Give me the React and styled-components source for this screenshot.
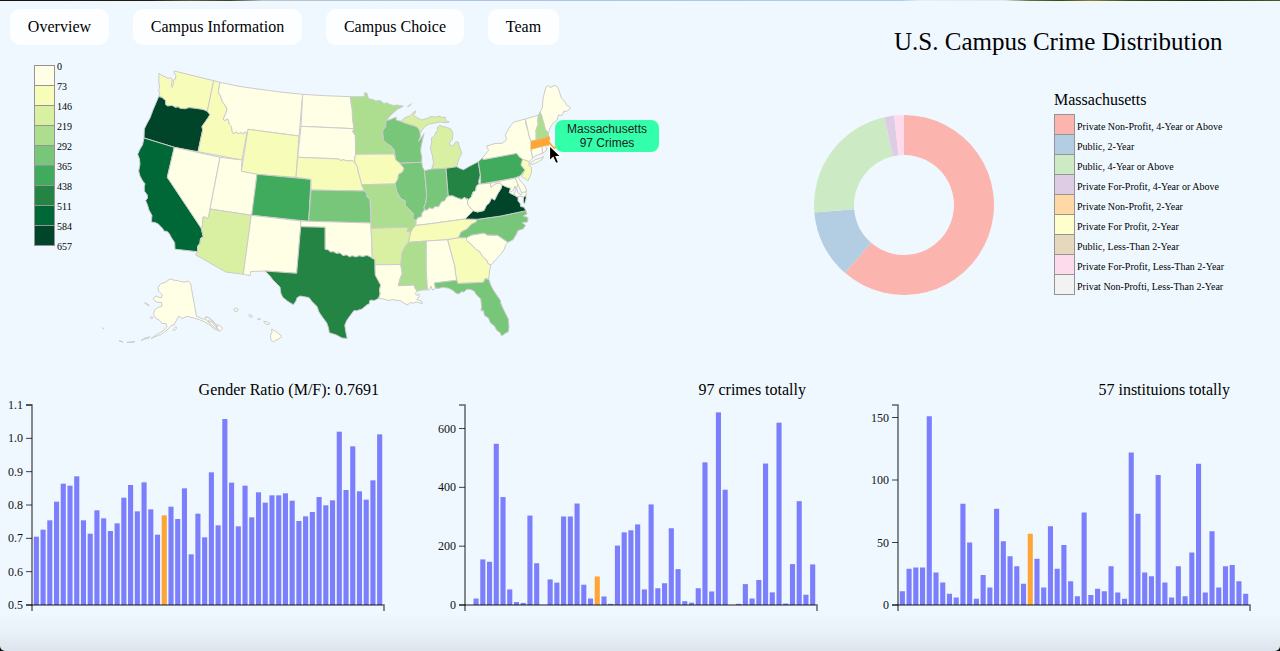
import React from "react";
import styled, { createGlobalStyle } from "styled-components";

const Global = createGlobalStyle`
  * { box-sizing: border-box; }
  html, body { margin: 0; padding: 0; background: #000; }
  body { font-family: "Liberation Serif", "Times New Roman", serif; color: #000; overflow: hidden; }
`;

const Page = styled.main`
  position: relative;
  display: flex;
  flex-direction: column;
  width: 1280px;
  height: 651px;
  overflow: hidden;
  border-radius: 0 0 5px 5px;
  background: linear-gradient(to bottom, rgba(221, 228, 236, 0) 612px, rgba(221, 228, 236, 0.35) 632px, #dde4ec 651px), #f0f8ff;
`;

const Backdrop = styled.div`
  flex: none;
  height: 1px;
  background: linear-gradient(to right, #14120c 0, #201d12 150px, #5c6238 190px, #3c4024 230px, #b9c4c9 262px, #a8c4ea 500px, #aecbf2 900px, #e6edf7 920px, #dfe8f4 1005px, #60733a 1030px, #38480f 1060px, #8a8630 1090px, #3c4a12 1130px, #232c08 1200px, #4d5c20 1280px);
`;

const Upper = styled.section`
  display: flex;
  flex: none;
  height: 374px;
`;

const MapPane = styled.div`
  display: flex;
  flex-direction: column;
  width: 800px;
`;

const Nav = styled.nav`
  display: flex;
  gap: 24px;
  height: 44px;
  padding: 8px 0 0 10px;
`;

const NavButton = styled.button`
  width: ${(p) => p.$width}px;
  height: 36px;
  padding: 0;
  border: 0;
  border-radius: 10px;
  background: #fdfeff;
  color: #000;
  font: 16px/36px "Liberation Serif", "Times New Roman", serif;
  letter-spacing: 0.03px;
  white-space: nowrap;
`;

const MapRow = styled.div`
  position: relative;
  display: flex;
  padding-left: 34px;
`;

const Scale = styled.ul`
  list-style: none;
  width: 56px;
  margin: 0;
  padding: 20px 0 0;
`;

const ScaleStep = styled.li`
  display: flex;
  height: 20px;
  font-size: 10px;
  line-height: 4px;
  gap: 2px;
`;

const Swatch = styled.span`
  flex: none;
  width: 21px;
  height: 21px;
  border: 1px solid #949494;
  background: ${(p) => p.$color};
`;

const ScaleEnd = styled.li`
  height: 8px;
  padding-left: 23px;
  font-size: 10px;
  line-height: 4px;
`;

const MapSvg = styled.svg`
  display: block;
  width: 500px;
  height: 305px;
`;

const Tooltip = styled.div`
  position: absolute;
  left: 555px;
  top: 75px;
  width: 104px;
  height: 32px;
  padding-top: 2px;
  border-radius: 8px;
  background: #33ffaa;
  color: #222;
  text-align: center;
  font: 12px/14px "Liberation Sans", Arial, sans-serif;
`;

const Cursor = styled.svg`
  position: absolute;
  left: 547px;
  top: 99px;
  width: 18px;
  height: 22px;
`;

const DonutPane = styled.div`
  display: flex;
  flex-direction: column;
  flex: 1;
`;

const Title = styled.h1`
  margin: 0;
  padding: 25px 0 0 94px;
  font-size: 25px;
  line-height: 32px;
  font-weight: 400;
  white-space: nowrap;
`;

const DonutRow = styled.div`
  display: flex;
  padding: 32px 0 0 14px;
`;

const Donut = styled.svg`
  flex: none;
  width: 180px;
  height: 180px;
  margin-top: 25px;
`;

const Key = styled.div`
  margin-left: 60px;
`;

const KeyTitle = styled.h2`
  margin: 0 0 5px;
  font-size: 16px;
  line-height: 19px;
  font-weight: 400;
`;

const KeyRow = styled.div`
  display: flex;
  gap: 2px;
  height: 20px;
  font-size: 10px;
  line-height: 26px;
  white-space: nowrap;
`;

const Charts = styled.section`
  display: flex;
  flex: none;
`;

const ChartCard = styled.figure`
  width: ${(p) => p.$width}px;
  margin: 0;
`;

const ChartTitle = styled.figcaption`
  height: 30px;
  padding: 5px ${(p) => p.$end}px 0 0;
  text-align: right;
  font-size: 16px;
  line-height: 20px;
  white-space: nowrap;
`;

const Plot = styled.svg`
  display: block;
  width: 100%;
  height: 216px;
  overflow: visible;
`;

const AxisText = styled.text`
  font-size: 12px;
  text-anchor: end;
  fill: #111;
`;

const YL = ["#ffffe5", "#f7fcb9", "#d9f0a3", "#addd8e", "#78c679", "#41ab5d", "#238443", "#006837", "#004529"];
const scaleLabels = [0, 73, 146, 219, 292, 365, 438, 511, 584];

const states = [
  ["WA", 1, "159,73 161,75 165,76.7 168,78.5 170.7,77.7 172.3,80 171.5,83 172,87.5 173.5,84 173.2,80 175.5,79 176,75 174,73.5 174.3,71 213.7,80.7 207.3,111.3 203,109.5 196.7,108.5 189,107.6 185,108.8 180,108.3 178,106.8 175.7,107.5 172,105.4 167.7,106 165.6,104.6 165.5,100.5 162,97.5 158.7,96.3 160,94 158.5,90 159.5,88 158.8,81"],
  ["OR", 8, "158.7,96.5 162,97.5 165.5,100.5 165.6,104.6 167.7,106 172,105.4 175.7,107.5 178,106.8 180,108.3 185,108.8 189,107.6 196.7,108.5 203,109.5 207.3,111.3 210,114.5 208,118 205,122.2 202,126.5 202.7,130 202,133 198,151.7 174.3,147.3 144,138 144.3,129 147,123.5 150,118 153,110"],
  ["CA", 7, "144,138 174.3,147.3 167.3,177.3 201.3,228.3 203.3,236.7 200.5,238.5 200,243.3 197.5,246.5 197.7,251.7 175,249.2 174.7,242.7 171,237 169.5,234 167.3,231.5 164,231 162.7,228.5 158.3,224 155,222.5 151.3,222 152,215.5 149,210 147.5,205 145.7,200.7 147.5,198 147.3,195 144.3,191 144.3,186.7 145,183.8 142.7,181 140,176 138.7,171 140,164 139.5,159 137.7,154.3 140,149 142.5,145"],
  ["NV", 0, "174.3,147.3 220,157.3 210,209 208.7,216.7 207.3,218.7 205,217 203,217.3 202.3,226.7 201.3,228.3 167.3,177.3"],
  ["ID", 1, "213.7,80.7 220,82.3 218.3,92.3 220.5,96 222.3,101.7 225,105 227,109 225.5,114 223.3,119 224.3,120.5 228,119 229.5,124.5 231.5,126.5 232,131 233.3,133.6 236,132 239,133.7 241,132.5 243.5,134 245,131.5 246.7,133.8 242,160 198,151.7 202.7,130 202,126.5 205,122.2 208,118 210,114.5 207.3,111.3"],
  ["MT", 0, "220,82.3 240,86.5 260,89.3 280,92 302.7,94.3 299,136 248,129.3 246.7,133.8 245,131.5 243.5,134 241,132.5 239,133.7 236,132 233.3,133.6 232,131 231.5,126.5 229.5,124.5 228,119 224.3,120.5 223.3,119 225.5,114 227,109 225,105 222.3,101.7 220.5,96 218.3,92.3"],
  ["WY", 1, "248,129.3 299,136 296,177.3 257,174.5 241.3,171.3"],
  ["UT", 0, "220,157.3 242,160 241.3,171.3 257,174.3 251.7,215.3 210,209"],
  ["CO", 5, "257,174.3 311,179.3 308.7,221.3 251.7,215.3"],
  ["AZ", 2, "210,209 251.3,215.3 243.3,274.3 225.7,272 195.3,254.7 197.7,251.7 197.5,246.5 200,243.3 200.5,238.5 203.3,236.7 201.3,228.3 202.3,226.7 203,217.3 205,217 207.3,218.7 208.7,216.7"],
  ["NM", 0, "251.3,215.3 300.7,221 300.7,226.7 296.7,273.3 265.7,271 250.7,271.5 250,275.7 243.3,274.3"],
  ["ND", 0, "302.7,94.3 325,95.7 350.3,96.7 351,103 352.3,110 352.5,118 354,128.7 301,126.3"],
  ["SD", 0, "301,126.3 354,128.7 352.7,131.7 355.3,135 355.7,154.3 354.7,158 355,162.7 352,160.3 350,161 346,160.6 343,159.7 341,160.5 338,158.9 297.7,157.3"],
  ["NE", 1, "297.7,157.3 338,158.9 341,160.5 343,159.7 346,160.6 350,161 352,160.3 355,162.7 357.5,167 358.3,172 359.8,177 361.7,184.5 364.3,191 311,190 311,179.3 296,177.3"],
  ["KS", 4, "311,190 364.3,191 367,193.5 367,197 370,199.5 371,223 308.7,221.3"],
  ["OK", 0, "300.7,221 371,223 371.7,241.7 372.3,258.3 369.5,256.5 366.7,255.4 363,256.5 359,255.8 356,257 352,255.7 350,257 346.5,255 343,255.6 340,253 336.5,253.4 333.3,251.7 330.5,252 328,249.8 325,249.3 325,227.3 300.7,226.7"],
  ["TX", 6, "300.7,226.7 325,227.3 325,249.3 328,249.8 330.5,252 333.3,251.7 336.5,253.4 340,253 343,255.6 346.5,255 350,257 352,255.7 356,257 359,255.8 363,256.5 366.7,255.4 369.5,256.5 372.3,258.3 375,259.3 375.3,275 378,280 380.7,285 379.5,290 380.2,294 378.7,298.3 374,300.7 371.7,300 369.5,300.8 369.5,303.5 366.7,305 362,309 356.7,310.7 354,310.5 351,314.5 347,320 344.8,325 345.6,331 347.2,338.5 342,338 336,334.8 329.3,332.7 328.5,328 326.8,323 322,316.5 319,312 317,306.5 312,301.5 309,297.6 300,296 297,297.8 296,301 293.3,304.7 288,301.5 282.7,297.3 280.8,293 280,287 273,280 270,276 265,271 296.7,273.3"],
  ["MN", 3, "350.3,96.7 364.3,96.7 364.8,92.7 367,93.2 368.3,98.6 373,99.6 375.5,101 380,100.5 384,103.5 387,102.8 390,104.6 394,105.5 397,105 403.3,106.2 397,109.6 391,115 386,120.7 385.7,126.7 382.7,130.7 383.3,140 387,143.5 391,146 394.3,150 394.3,154 355.7,154.3 355.3,135 352.7,131.7 354,128.7 352.5,118 352.3,110"],
  ["WI", 4, "386,120.7 390,119.6 394,118 396.3,117.2 396,120 400.7,121.3 408,124 415,126 417.6,127.3 419.3,130 420,132.5 420.4,136.5 418.5,141.5 421.5,137.5 424,133.3 422.5,140 421,147 420.7,152 421.9,157 421.7,162.3 400,163.3 395.7,160 394.3,150 391,146 387,143.5 383.3,140 382.7,130.7 385.7,126.7"],
  ["IA", 1, "355.7,154.3 394.3,154 395.7,160 400,163.3 404,168.3 402.7,172 398.5,174.5 398,179 395,184 361.7,184.7 359.8,177 358.3,172 357.5,167 355,162.7 354.7,158"],
  ["UP", 2, "400.7,121.3 405,117.6 410,116 415,110.7 416,111.5 413.5,115.5 416,117 421.7,120 427,118.4 431,116.6 436,117 440,116 441,117.5 445,117 445.5,120.5 449.3,122 446,122.7 440,122 433.3,123.3 428.5,124.2 425,126.7 422,130 420.7,132.7 419.3,130 417.6,127.3 415,126 408,124"],
  ["Isle Royale", 2, "407.5,107 409.5,104.7 411.5,103.8 409,106.5"],
  ["MI", 2, "439.3,125.5 445,127 450.7,128.7 453,133 452.3,139 449.5,143 450.5,146 453,146 455.5,142 458,142 459.7,147 461.8,153.3 458.5,160 456.7,166.7 446,168.3 431.7,169 433.5,163 432.5,156 430.5,149 431.7,141 431.3,138 434,136.7 436,132 438,130.5 437,128"],
  ["IL", 4, "400,163.3 421.7,162.3 422.5,167 424.5,170.7 426.7,195 425.7,203.3 424,207 424.5,210 422,213 421.7,216.7 418,217.5 416,220.7 412.7,218 413.3,213.3 409,209.5 405,205 405.5,201 401,199 396.7,191.7 395,184 398,179 398.5,174.5 402.7,172 404,168.3"],
  ["IN", 4, "424.5,170.7 431.7,169 446,168.3 448.3,196 446,198 445,200.7 441.5,201.8 438.5,207 435,206.5 433,208.8 429.5,208 427,210.2 424.5,210 424,207 425.7,203.3 426.7,195"],
  ["OH", 6, "446,168.3 456.7,166.7 460,168.4 463.5,169.7 469,166.5 478.3,161.7 480.4,175 478.7,181 479,184 476.5,186 475.5,191 473,192 471.5,196.5 469,199.5 464.5,197.6 461.5,199.4 456,197.6 453,196 448.3,196"],
  ["KY", 0, "448.3,196 453,196 456,197.6 461.5,199.4 464.5,197.6 467.5,200.7 468,205 473.3,210.7 469,215 465,219 425,224.4 415.7,225.4 416,220.7 418,217.5 421.7,216.7 422,213 424.5,210 427,210.2 429.5,208 433,208.8 435,206.5 438.5,207 441.5,201.8 445,200.7 446,198"],
  ["TN", 1, "415.7,225.4 425,224.4 465,219 477.5,219.3 476,222 471,224.6 467,229 461,232 458.5,237.7 447.7,239.7 408.3,242.3 410.7,232 413,228"],
  ["MO", 3, "361.7,184.7 395,184 396.7,191.7 401,199 405.5,201 405,205 409,209.5 413.3,213.3 412.7,218 416,220.7 415.7,225.4 413,228 410.7,232 407,232 408,227.6 371,228.3 371,203 370,199.5 367,197 367,193.5 364.3,191"],
  ["AR", 2, "371,228.3 408,227.3 407,232 410.7,232 408.3,242.3 405,247 401.7,253.3 401.5,259 400.7,264.5 375,264.8 375,259.3 372.3,258.3 371.7,241.7"],
  ["LA", 0, "375,264.8 400.7,264.5 402.3,273.3 400,279 398.3,285.7 414.3,285 415,288 417,291.2 415,293.5 417,295.7 419,293.7 419.2,296.5 416.7,299.5 421.5,301 422.3,303.7 419,302.5 416.5,302 413,303.2 411,302.4 407,305 403,302.5 400,300.5 397,300.5 393,299.5 388,300.5 384,299 378.7,298.3 380.2,294 379.5,290 380.7,285 378,280 375.3,275"],
  ["MS", 3, "408.3,242.3 426.3,241 426.3,270 427.5,289.8 422,290 417,291.2 415,288 414.3,285 398.3,285.7 400,279 402.3,273.3 400.7,264.5 401.5,259 401.7,253.3 405,247"],
  ["AL", 0, "426.3,241 447.7,239.7 455,266.7 455.5,273 457,280.2 434.3,283 435.5,288.3 432.5,290.2 431,286 429.5,289.7 427.5,289.8 426.3,270"],
  ["FL", 4, "434.3,283 457,280.2 457.7,283.3 483.3,282.3 485,278.5 489,279.5 490.5,284.5 493.3,290 497,295.5 500.5,300.5 501,304 505,312.5 508.3,319 509,327 508.3,331.7 505,333.5 501.7,336 500,332.5 496.7,330.3 494.5,326 490.5,323 488.5,318 484.5,315.5 483.5,310.5 481,311 481.5,306 480.7,298.8 477,295.5 474,291 470,289.3 466.5,289.5 464,292 461.5,291.7 459,294 456,293.3 453,290.5 449,288.3 443,287.3 439,288.3 435.5,288.3"],
  ["GA", 1, "447.7,239.7 458.5,237.7 466.5,237.5 466.5,240.5 471,244 475,248.5 480,252 483,257 486.7,260 488,263.5 491,265 489.5,271 488.8,279 485,278.5 483.3,282.3 457.7,283.3 457,280.2 455.5,273 455,266.7"],
  ["SC", 0, "466.5,237.7 471.7,235 484,233 487.5,235 497.5,235.2 508,242.3 505.5,245 504.5,249 501,254 496,259.5 491,264.8 488,263.5 486.7,260 483,257 480,252 475,248.5 471,244 466.5,240.5"],
  ["NC", 4, "477.5,219.3 501,216 526,210.7 527,214 523,216 528,217.5 527.5,222 522,222.5 525.5,225.5 523,229 518,230.5 516.5,234 512.8,240 508,242.3 497.5,235.2 487.5,235 484,233 471.7,235 466.5,237.7 458.5,237.7 461,232 467,229 471,224.6 476,222"],
  ["VA", 8, "465,219 469,215 473.3,210.7 477.5,212 484,210.5 486.5,205 489,203.3 491.5,198 494.5,200 497.5,194 501,188.5 502,184.7 505.5,186.5 510.7,188.3 509.3,192.7 512.5,194.5 518,197 518,201 520.3,203.7 520.5,206.5 524,207.2 526,210.7 501,216 477.5,219.3"],
  ["VA shore", 8, "523.5,197 526,195.3 526,198.5 524.5,204 523.3,202"],
  ["WV", 0, "479,184 480.5,183.8 490.3,183.3 491,187.3 495,184 499,182.7 502,184.7 501,188.5 497.5,194 494.5,200 491.5,198 489,203.3 486.5,205 484,210.5 477.5,212 473.3,210.7 468,205 467.5,200.7 469,199.5 471.5,196.5 473,192 475.5,191 476.5,186"],
  ["PA", 5, "478.3,161.7 482.7,157.7 483.3,159.5 516.7,153.3 519,156.5 522.7,159.3 521,165 525,170 520,176 515,178 482,183.8 480.7,184 480.4,175"],
  ["MD", 0, "490.3,183.3 515.5,178 518,184 516.5,188 518,193 521,195 523,191 526.7,193.3 526,195.3 523.5,197 520,196 516.7,197 514,194 516,190 515,186 513.5,190 509.3,192.7 510.7,188.3 505.5,186.5 502,184.7 499,182.7 495,184 491,187.3"],
  ["DE", 0, "515.5,178.5 518,176.8 520.5,181 525,186 526.7,191.5 521.5,192.5"],
  ["NJ", 1, "522.7,159.3 526,160 529.5,161.5 528.8,165.5 531.5,167 531.3,173.5 528,181 525,178.5 521.3,176.5 525,170 521,165"],
  ["NY", 0, "482.7,157.7 488.5,150.5 486.7,146 495,143.5 502,143.3 506.5,140 505.5,134.5 509,128 513.3,122.3 525.3,119 526,125 528.3,131.7 529.3,137 531,141 531,150 532.7,158 529.5,161.5 522.7,159.3 519,156.5 516.7,153.3 483.3,159.5"],
  ["Long Island", 0, "530.5,163 535,159.8 541,158 543.7,156.3 542,159.5 537,162.5 531,164.7"],
  ["VT", 0, "525.3,119 538.3,115.3 537.7,121 538.3,124 536,130 536.2,140 531,141 529.3,137 528.3,131.7"],
  ["NH", 3, "540,112 541.5,114.5 545.5,129.5 548.5,133 548.5,136 546.5,137.7 536.2,140 536,130 538.3,124 537.7,121 538.3,115.3"],
  ["ME", 0, "540,112 542.5,107 542.7,102 543.3,97 546,87 548.5,85.5 550,87.5 555,85.3 558,87.5 561.5,98.5 565,101.5 566.5,105 570.5,108 567,111.5 564,111 562,115.5 558.5,115 557,120 552,124.5 550,128 548.5,133 545.5,129.5 541.5,114.5"],
  ["CT", 0, "531,149 542,146.3 542.7,153.3 536,155.5 532.5,158"],
  ["RI", 0, "542,146.3 545.5,145.3 547,150 542.7,153.3"],
  ["AK", 0, "158,287.5 161,283.5 165,282.5 169,279.7 171,278.8 174,280.3 177,280.3 181,281.7 185,282 188,281 190.5,283 196.5,316.5 199,317.2 202,318.8 205,319.2 207,316.8 210,318.5 213,321 216,324.7 220,325.5 222.7,328.7 220,331.3 214,328.7 209,324.5 204,321.5 198,319.2 193,317.8 187,316.3 182,318.5 179,316 176,321 174,325 171,325.5 169,328 166,331 161,334.5 155,336.7 151,338.5 156,335 163,331 167,326.5 166,323.5 162,323.5 160,320.5 156,318.5 153.5,314.5 154.5,310 158.5,307.2 162,306.2 161.5,302.5 156,302 153,298.5 156,296 161,298 162.5,295 158.5,291"],
  ["Kodiak", 0, "173,329.5 176,326.5 176.5,328.5 174,331"],
  ["St Lawrence", 0, "144.5,302.7 147,303.7 149.3,305.3 147,305"],
  ["Panhandle isles", 0, "205,317 208,317.5 214,323 218,327 212,325 207,321"],
  ["Baranof", 0, "208,320.5 212,322 217,328 219,330.5 213,326.5"],
  ["Aleutians 1", 0, "141,340.6 144,339.2 149,338 150,336.8 145,338"],
  ["Aleutians 2", 0, "127,342.3 131,342.5 135,341.6 131,341.9"],
  ["Aleutians 3", 0, "119,340.5 121,341.2 123,342 121,341.7"],
  ["Aleutians 4", 0, "102.5,328 104,328.5 103.7,329"],
  ["Nunivak", 0, "150,317.4 152,316.5 153,318 151,318.7"],
  ["Kauai", 0, "233.8,309 236.3,308 238.3,309.3 237.5,311.2 234.7,311.3"],
  ["Oahu", 0, "248.7,315 250.7,314.3 252.6,316.6 250,317.2"],
  ["Molokai", 0, "257.5,319 260.5,318.8 260,319.7"],
  ["Maui", 0, "263.5,321.3 266,321.6 270,323.5 268,324.9 265.4,323.9"],
  ["Hawaii", 0, "271.7,329 276,331.5 278.5,333.5 282,336.5 278,339.3 273.5,341.7 271,340.5 270.5,335.5 272,332"],
];

const massachusetts = "531,141.5 546.5,137.7 549,136 550,139 549,141 552,145 554,147 556,146.5 555,149 551,149 548.5,145.5 545.5,145.3 531,149.2";

const sectors = [
  [35, "#fbb4ae", "Private Non-Profit, 4-Year or Above"],
  [7, "#b3cde3", "Public, 2-Year"],
  [13, "#ccebc5", "Public, 4-Year or Above"],
  [1, "#decbe4", "Private For-Profit, 4-Year or Above"],
  [0, "#fed9a6", "Private Non-Profit, 2-Year"],
  [0, "#ffffcc", "Private For Profit, 2-Year"],
  [0, "#e5d8bd", "Public, Less-Than 2-Year"],
  [1, "#fddaec", "Private For-Profit, Less-Than 2-Year"],
  [0, "#f2f2f2", "Privat Non-Profti, Less-Than 2-Year"],
];

const ratios = [705, 726, 754, 810, 864, 858, 886, 754, 714, 784, 760, 722, 745, 822, 860, 781, 868, 787, 711, 769, 795, 758, 850, 652, 774, 703, 898, 739, 1058, 867, 736, 858, 763, 838, 807, 829, 829, 835, 813, 752, 766, 779, 824, 799, 814, 1020, 845, 976, 841, 816, 874, 1012].map((v) => v / 1000);
const crimes = [0, 22, 155, 147, 548, 367, 53, 10, 7, 304, 142, 0, 87, 76, 301, 301, 345, 69, 22, 97, 29, 4, 202, 247, 254, 274, 53, 342, 57, 74, 261, 122, 13, 8, 57, 485, 46, 655, 392, 0, 4, 71, 22, 85, 481, 43, 620, 5, 139, 353, 35, 138];
const schools = [11, 29, 30, 30, 151, 26, 18, 9, 6, 81, 50, 5, 24, 14, 77, 51, 39, 31, 17, 57, 37, 14, 63, 29, 48, 19, 7, 74, 8, 13, 11, 31, 10, 5, 122, 73, 26, 23, 104, 18, 6, 31, 7, 42, 113, 10, 59, 14, 31, 32, 19, 9];

function arcs() {
  const total = sectors.reduce((sum, s) => sum + s[0], 0);
  let from = 0;
  return sectors.filter((s) => s[0] > 0).map(([n, color]) => {
    const to = from + (n / total) * Math.PI * 2;
    const pt = (r, a) => `${(90 + r * Math.sin(a)).toFixed(2)},${(90 - r * Math.cos(a)).toFixed(2)}`;
    const large = to - from > Math.PI ? 1 : 0;
    const d = `M${pt(90, from)}A90,90 0 ${large} 1 ${pt(90, to)}L${pt(50, to)}A50,50 0 ${large} 0 ${pt(50, from)}Z`;
    from = to;
    return <path key={color} d={d} fill={color} />;
  });
}

function BarChart({ width, axis, title, titleEnd, values, min, max, ticks, format }) {
  const y = (v) => 200 - ((v - min) / (max - min)) * 200;
  return (
    <ChartCard $width={width}>
      <ChartTitle $end={titleEnd}>{title}</ChartTitle>
      <Plot>
        {values.map((v, i) => (
          <rect key={i} x={axis + 1.8 + i * 6.732} y={y(v)} width={5.1} height={200 - y(v)} fill={i === 19 ? "#ffa535" : "#7b7ffb"} />
        ))}
        <g fill="none" stroke="#000" strokeOpacity="0.6" strokeWidth="1.5">
          <path d={`M${axis - 6},0H${axis}V200H${axis - 6}`} />
          <path d={`M${axis},206V200H${axis + 352}V206`} />
        </g>
        {ticks.map((t) => (
          <g key={t}>
            <line x1={axis - 6} x2={axis} y1={y(t)} y2={y(t)} stroke="#000" strokeOpacity="0.75" />
            <AxisText x={axis - 9} y={y(t) + 4}>{format ? format(t) : t}</AxisText>
          </g>
        ))}
      </Plot>
    </ChartCard>
  );
}

export default function App() {
  return (
    <>
      <Global />
      <Page>
        <Backdrop />
        <Upper>
          <MapPane>
            <Nav>
              <NavButton $width={99}>Overview</NavButton>
              <NavButton $width={169}>Campus Information</NavButton>
              <NavButton $width={138}>Campus Choice</NavButton>
              <NavButton $width={71}>Team</NavButton>
            </Nav>
            <MapRow>
              <Scale>
                {scaleLabels.map((n, i) => (
                  <ScaleStep key={n}><Swatch $color={YL[i]} />{n}</ScaleStep>
                ))}
                <ScaleEnd>657</ScaleEnd>
              </Scale>
              <MapSvg viewBox="90 45 500 305">
                <g stroke="#ccc" strokeWidth="1" strokeLinejoin="round">
                  {states.map(([name, level, points]) => (
                    <polygon key={name} points={points} fill={YL[level]} />
                  ))}
                  <polygon points={massachusetts} fill="#ffa535" stroke="#ffa535" strokeWidth="0.5" />
                </g>
              </MapSvg>
              <Tooltip>Massachusetts<br />97 Crimes</Tooltip>
              <Cursor viewBox="0 0 18 22">
                <path d="M2.5 1.5V17l3.6-3.4 2.7 6 2.9-1.2-2.6-5.9h4.8z" fill="#000" stroke="#fff" strokeWidth="1.2" />
              </Cursor>
            </MapRow>
          </MapPane>
          <DonutPane>
            <Title>U.S. Campus Crime Distribution</Title>
            <DonutRow>
              <Donut viewBox="0 0 180 180">{arcs()}</Donut>
              <Key>
                <KeyTitle>Massachusetts</KeyTitle>
                {sectors.map(([, color, label]) => (
                  <KeyRow key={label}><Swatch $color={color} />{label}</KeyRow>
                ))}
              </Key>
            </DonutRow>
          </DonutPane>
        </Upper>
        <Charts>
          <BarChart width={420} axis={32} title="Gender Ratio (M/F): 0.7691" titleEnd={41} values={ratios} min={0.5} max={1.1} ticks={[0.5, 0.6, 0.7, 0.8, 0.9, 1.0, 1.1]} format={(t) => t.toFixed(1)} />
          <BarChart width={430} axis={45} title="97 crimes totally" titleEnd={44} values={crimes} min={0} max={680} ticks={[0, 200, 400, 600]} />
          <BarChart width={430} axis={48} title="57 instituions totally" titleEnd={50} values={schools} min={0} max={160} ticks={[0, 50, 100, 150]} />
        </Charts>
      </Page>
    </>
  );
}
